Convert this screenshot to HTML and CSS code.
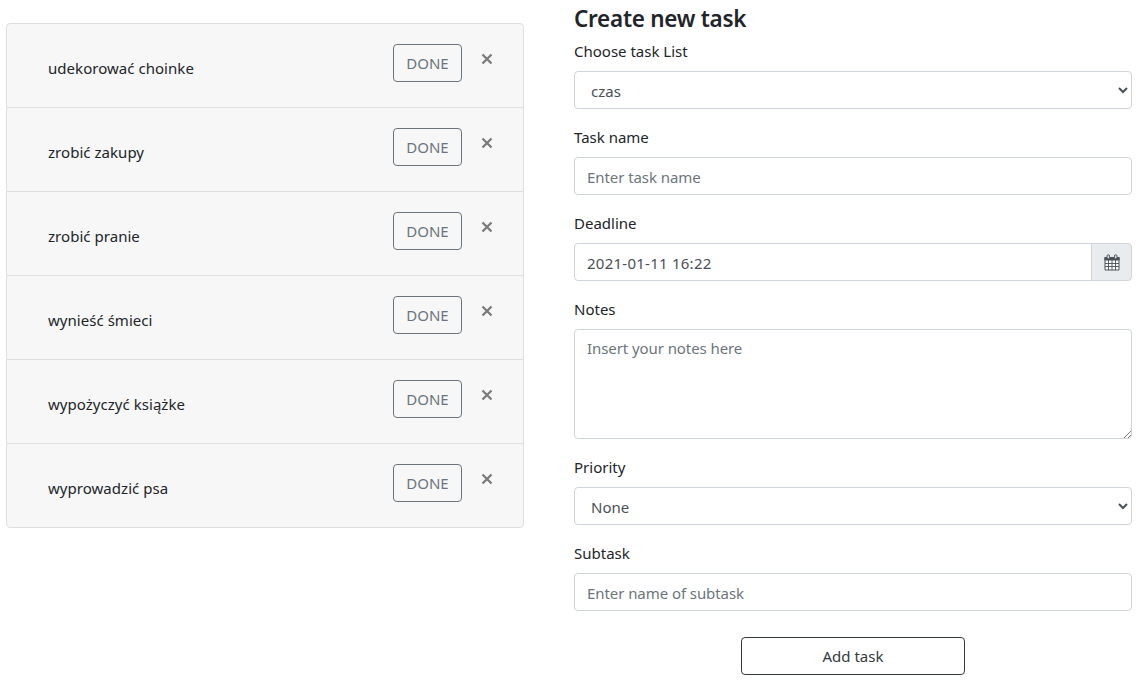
FILE: index.html
```html
<!DOCTYPE html>
<html lang="en">
<head>
<meta charset="utf-8">
<title>Tasks</title>
<link rel="stylesheet" href="styles.css">
</head>
<body>
<main class="page">
  <ul class="task-list">
    <li class="task"><span class="task-name">udekorować choinke</span><button class="btn btn-done">DONE</button><button class="close" aria-label="Delete"><svg width="12" height="12" viewBox="0 0 12 12"><path d="M1.5 1.5l9 9M10.5 1.5l-9 9"/></svg></button></li>
    <li class="task"><span class="task-name">zrobić zakupy</span><button class="btn btn-done">DONE</button><button class="close" aria-label="Delete"><svg width="12" height="12" viewBox="0 0 12 12"><path d="M1.5 1.5l9 9M10.5 1.5l-9 9"/></svg></button></li>
    <li class="task"><span class="task-name">zrobić pranie</span><button class="btn btn-done">DONE</button><button class="close" aria-label="Delete"><svg width="12" height="12" viewBox="0 0 12 12"><path d="M1.5 1.5l9 9M10.5 1.5l-9 9"/></svg></button></li>
    <li class="task"><span class="task-name">wynieść śmieci</span><button class="btn btn-done">DONE</button><button class="close" aria-label="Delete"><svg width="12" height="12" viewBox="0 0 12 12"><path d="M1.5 1.5l9 9M10.5 1.5l-9 9"/></svg></button></li>
    <li class="task"><span class="task-name">wypożyczyć książke</span><button class="btn btn-done">DONE</button><button class="close" aria-label="Delete"><svg width="12" height="12" viewBox="0 0 12 12"><path d="M1.5 1.5l9 9M10.5 1.5l-9 9"/></svg></button></li>
    <li class="task"><span class="task-name">wyprowadzić psa</span><button class="btn btn-done">DONE</button><button class="close" aria-label="Delete"><svg width="12" height="12" viewBox="0 0 12 12"><path d="M1.5 1.5l9 9M10.5 1.5l-9 9"/></svg></button></li>
  </ul>
  <form class="task-form">
    <h1 class="title">Create new task</h1>
    <div class="group">
      <label class="label" for="list">Choose task List</label>
      <select class="control" id="list"><option>czas</option></select>
    </div>
    <div class="group">
      <label class="label" for="name">Task name</label>
      <input class="control" id="name" placeholder="Enter task name">
    </div>
    <div class="group">
      <label class="label" for="deadline">Deadline</label>
      <div class="input-group">
        <input class="control date" id="deadline" value="2021-01-11 16:22">
        <span class="addon">
          <svg width="16" height="17" viewBox="0 0 16 17">
            <path class="sheet" d="M1 3.500h14v12.500H1z"/>
            <path class="head" d="M.5 3h15v3.500H.5z"/>
            <path class="grid" d="M1 9.500h14M1 12.500h14M4.500 6v10M8 6v10M11.500 6v10"/>
            <rect class="ring" x="3" y=".8" width="2.600" height="4" rx="1.200"/>
            <rect class="ring" x="10.400" y=".8" width="2.600" height="4" rx="1.200"/>
          </svg>
        </span>
      </div>
    </div>
    <div class="group">
      <label class="label" for="notes">Notes</label>
      <textarea class="control notes" id="notes" placeholder="Insert your notes here"></textarea>
    </div>
    <div class="group">
      <label class="label" for="priority">Priority</label>
      <select class="control" id="priority"><option>None</option></select>
    </div>
    <div class="group">
      <label class="label" for="subtask">Subtask</label>
      <input class="control subtask" id="subtask" placeholder="Enter name of subtask">
    </div>
    <button type="button" class="btn btn-add">Add task</button>
  </form>
</main>
</body>
</html>
```
FILE: styles.css
```css
*, *::before, *::after { box-sizing: border-box; }
body {
  margin: 0;
  background: #fff;
  color: #212529;
  font: 400 15px/24px "Noto Sans", "Open Sans", sans-serif;
}
.page {
  display: grid;
  grid-template-columns: 518px 558px;
  column-gap: 50px;
  align-items: start;
  padding-left: 6px;
}
.task-list {
  margin: 23px 0 0;
  padding: 0;
  list-style: none;
  border: 1px solid #dfdfdf;
  border-radius: 4px;
  background: #f7f7f7;
}
.task {
  display: flex;
  align-items: flex-start;
  height: 84px;
  padding: 20px 30.5px 0 41px;
}
.task:first-child { height: 83px; }
.task + .task { border-top: 1px solid #dfdfdf; }
.task-name { flex: 1; padding-top: 12px; letter-spacing: .04px; }
.btn {
  height: 38px;
  padding: 0;
  border: 1px solid;
  border-radius: 4px;
  background: transparent;
  font: inherit;
}
.btn-done { width: 69px; color: #6c757d; }
.close {
  display: flex;
  margin: 9px 0 0 18.5px;
  padding: 0;
  border: 0;
  background: none;
}
.close svg { fill: none; stroke: #7b7b7b; stroke-width: 2.3; }
.task-form { padding-top: 4px; }
.title {
  margin: 0 0 6px;
  font-size: 22.5px;
  font-weight: 600;
  line-height: 29px;
  letter-spacing: -.28px;
}
.group { margin-bottom: 16px; }
.label { display: block; margin-bottom: 8px; }
.control {
  display: block;
  width: 100%;
  height: 38px;
  margin: 0;
  padding: 8px 12px 6px;
  border: 1px solid #ced4da;
  border-radius: 4px;
  background: #fff;
  color: #495057;
  font: inherit;
}
select.control { padding-right: 0; }
.control::placeholder { color: #6c757d; opacity: 1; }
.notes { height: 110px; padding-top: 6px; resize: vertical; letter-spacing: -.08px; }
.subtask, #name { letter-spacing: -.07px; }
.input-group { display: flex; }
.date { flex: 1; width: auto; border-radius: 4px 0 0 4px; letter-spacing: .25px; }
.addon {
  display: flex;
  align-items: center;
  justify-content: center;
  width: 41px;
  margin-left: -1px;
  border: 1px solid #ced4da;
  border-radius: 0 4px 4px 0;
  background: #e9ecef;
}
.sheet { fill: #fff; stroke: #495057; }
.head { fill: #495057; }
.grid { fill: none; stroke: #495057; stroke-width: .9; }
.ring { fill: #d5d8db; stroke: #495057; stroke-width: .9; }
.btn-add {
  display: block;
  width: 224px;
  margin: 26px auto 0;
  color: #343a40;
}
.notes::-webkit-resizer {
  background: linear-gradient(135deg, transparent 74%, #777 74% 79%, transparent 79% 87%, #777 87% 92%, transparent 92%);
}
```
